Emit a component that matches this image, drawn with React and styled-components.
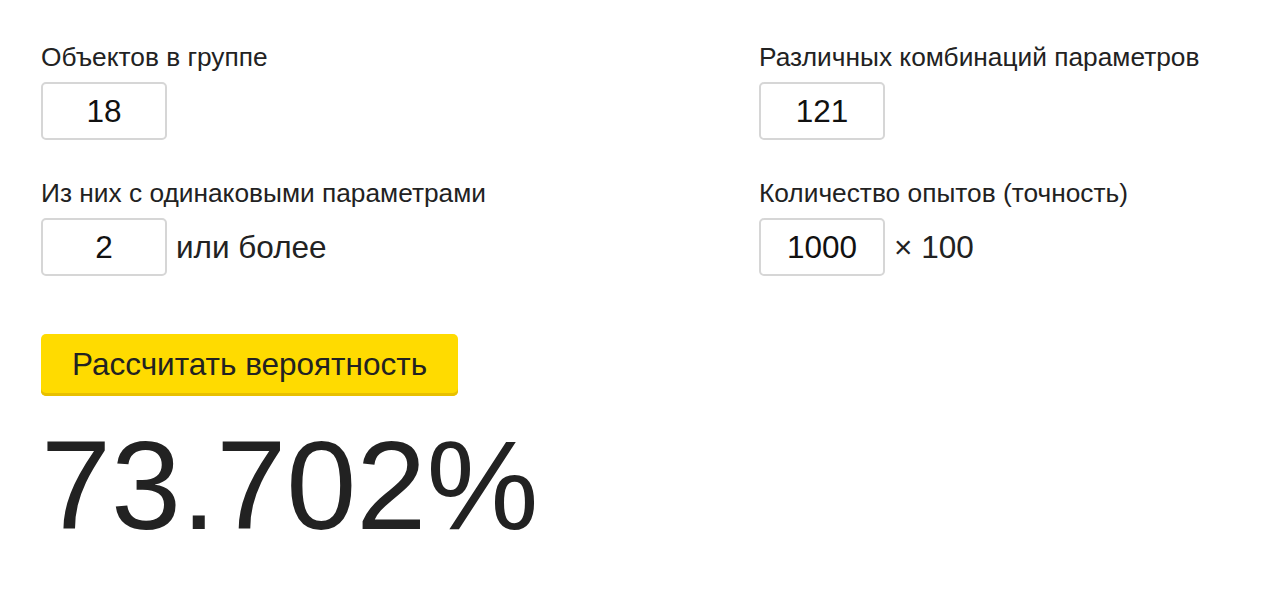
import React, { useState } from 'react';
import styled, { createGlobalStyle } from 'styled-components';

const GlobalStyle = createGlobalStyle`
  body {
    margin: 0;
    background: #fff;
    font-family: "Liberation Sans", Arial, sans-serif;
    color: #222;
  }
`;

const Page = styled.div`
  padding: 42px 41px 0;
`;

const Fields = styled.div`
  display: grid;
  grid-template-columns: 718px 1fr;
  row-gap: 38px;
`;

const Field = styled.div`
  display: flex;
  flex-direction: column;
  gap: 10px;
`;

const Label = styled.label`
  font-size: 26.3px;
  line-height: 30px;
  color: #222;
`;

const InputRow = styled.div`
  display: flex;
  align-items: center;
  gap: 9px;
`;

const NumberInput = styled.input`
  box-sizing: border-box;
  width: 126px;
  height: 58px;
  border: 2px solid #d6d6d6;
  border-radius: 5px;
  font-family: inherit;
  font-size: 31.5px;
  color: #111;
  text-align: center;
  padding: 0;
  outline: none;
`;

const Suffix = styled.span`
  font-size: 31.5px;
  color: #222;
`;

const CalcButton = styled.button`
  display: block;
  margin-top: 58px;
  height: 62px;
  padding: 0 31px 2px;
  border: none;
  border-radius: 5px;
  background: #ffdb00;
  box-shadow: inset 0 -3px 0 #e8c000;
  font-family: inherit;
  font-size: 31.5px;
  color: #222;
  cursor: pointer;
`;

const Result = styled.div`
  font-size: 126px;
  line-height: 1;
  margin-top: 27px;
  color: #222;
`;

const App = () => {
  const [objects, setObjects] = useState('18');
  const [same, setSame] = useState('2');
  const [combos, setCombos] = useState('121');
  const [runs, setRuns] = useState('1000');

  return (
    <Page>
      <GlobalStyle />
      <Fields>
        <Field>
          <Label>Объектов в группе</Label>
          <InputRow>
            <NumberInput value={objects} onChange={(e) => setObjects(e.target.value)} />
          </InputRow>
        </Field>
        <Field>
          <Label>Различных комбинаций параметров</Label>
          <InputRow>
            <NumberInput value={combos} onChange={(e) => setCombos(e.target.value)} />
          </InputRow>
        </Field>
        <Field>
          <Label>Из них с одинаковыми параметрами</Label>
          <InputRow>
            <NumberInput value={same} onChange={(e) => setSame(e.target.value)} />
            <Suffix>или более</Suffix>
          </InputRow>
        </Field>
        <Field>
          <Label>Количество опытов (точность)</Label>
          <InputRow>
            <NumberInput value={runs} onChange={(e) => setRuns(e.target.value)} />
            <Suffix>× 100</Suffix>
          </InputRow>
        </Field>
      </Fields>
      <CalcButton>Рассчитать вероятность</CalcButton>
      <Result>73.702%</Result>
    </Page>
  );
};

export default App;
